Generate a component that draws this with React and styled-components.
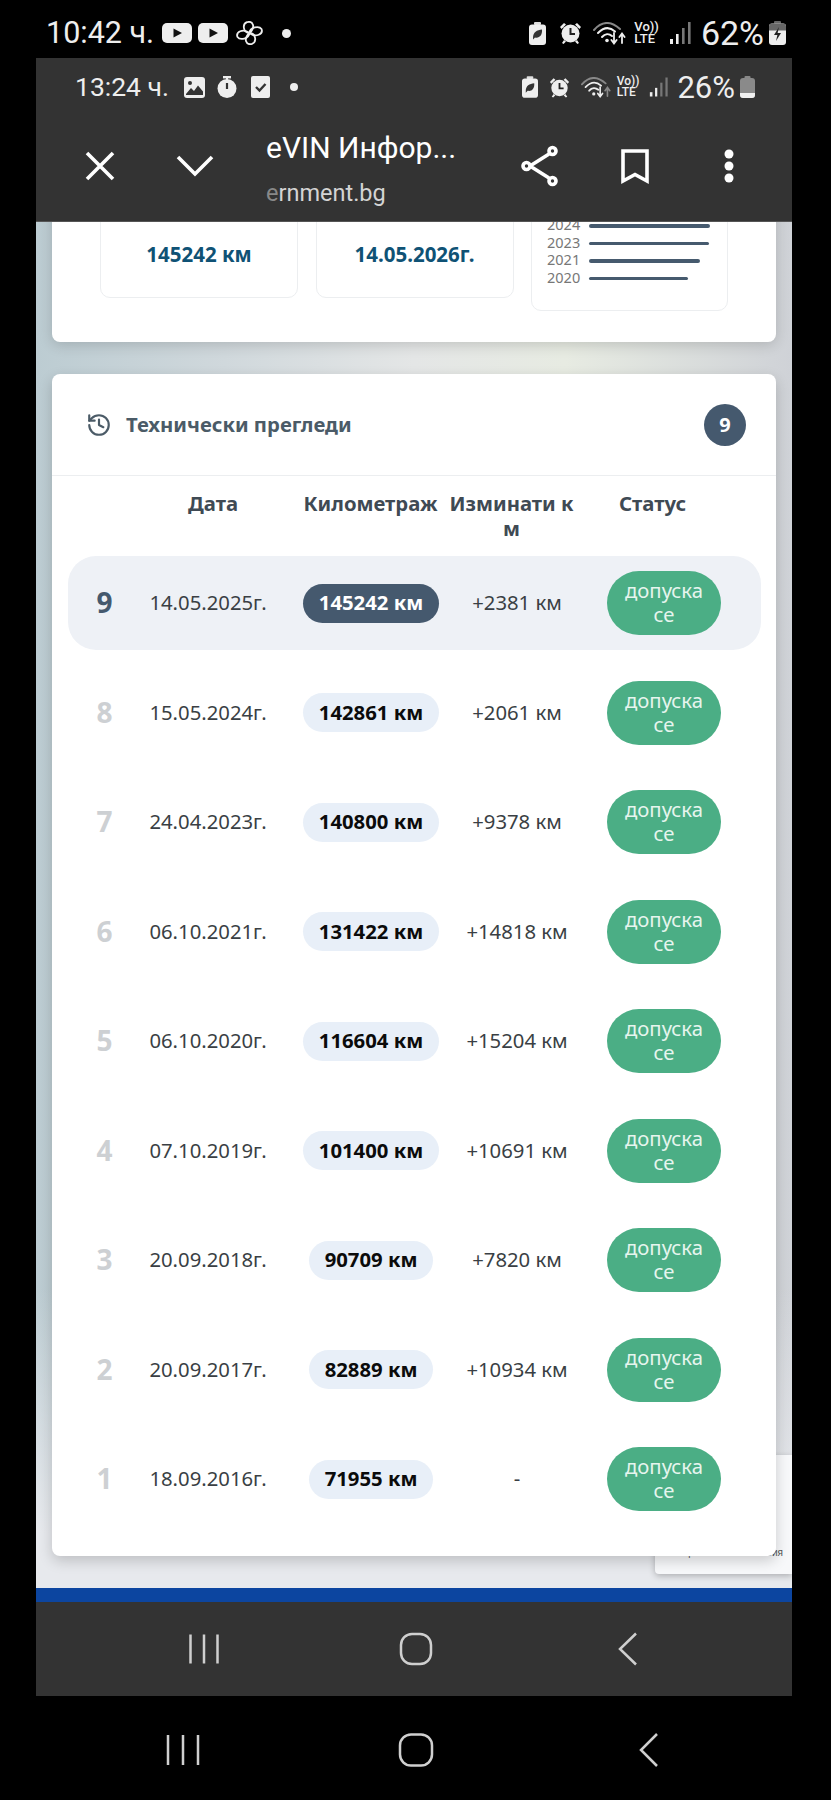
import React from 'react';
import styled, { createGlobalStyle } from 'styled-components';
import { History } from 'lucide-react';

const inspections = [
  { n: 9, date: '14.05.2025г.', km: '145242 км', diff: '+2381 км', active: true },
  { n: 8, date: '15.05.2024г.', km: '142861 км', diff: '+2061 км' },
  { n: 7, date: '24.04.2023г.', km: '140800 км', diff: '+9378 км' },
  { n: 6, date: '06.10.2021г.', km: '131422 км', diff: '+14818 км' },
  { n: 5, date: '06.10.2020г.', km: '116604 км', diff: '+15204 км' },
  { n: 4, date: '07.10.2019г.', km: '101400 км', diff: '+10691 км' },
  { n: 3, date: '20.09.2018г.', km: '90709 км', diff: '+7820 км' },
  { n: 2, date: '20.09.2017г.', km: '82889 км', diff: '+10934 км' },
  { n: 1, date: '18.09.2016г.', km: '71955 км', diff: '-' }
];

const chart = [
  { year: 2024, width: 121 },
  { year: 2023, width: 120 },
  { year: 2021, width: 111 },
  { year: 2020, width: 99 }
];

function YouTube({ ml }) {
  return (
    <Glyph $ml={ml} width="30" height="20" viewBox="0 0 30 20">
      <rect width="30" height="20" rx="5" fill="#eee" />
      <path d="M11.5 5.5 L20 10 L11.5 14.5 Z" fill="#111" />
    </Glyph>
  );
}

function Fan({ ml }) {
  return (
    <Glyph $ml={ml} width="27" height="24" viewBox="0 0 27 24" fill="none" stroke="#eee" strokeWidth="1.8">
      <path d="M13.5 12 C7 11.5 6 3 11 1.2 C17 -.5 20 6 13.5 12 Z" />
      <path d="M13.5 12 C14 6 23 4.5 25.5 8 C27.5 13 20 17 13.5 12 Z" />
      <path d="M13.5 12 C20 12.5 21 21 16 22.8 C10 24.5 7 18 13.5 12 Z" />
      <path d="M13.5 12 C13 18 4 19.5 1.5 16 C-.5 11 7 7 13.5 12 Z" />
    </Glyph>
  );
}

function Dot({ ml, size = 9 }) {
  return (
    <Glyph $ml={ml} width={size} height={size} viewBox="0 0 10 10">
      <circle cx="5" cy="5" r="5" fill="#eee" />
    </Glyph>
  );
}

function LeafBattery({ ml, w = 17, h = 23 }) {
  return (
    <Glyph $ml={ml} width={w} height={h} viewBox="0 0 17 23">
      <rect x="5" width="7" height="3" rx="1" fill="#ddd" />
      <rect y="2.5" width="17" height="20.5" rx="3" fill="#eee" />
      <path d="M4 16 C4 10 8 8 13 7.5 C13.5 13 10.5 16.5 6 15.5 L4 17.5 Z" fill="#333" />
    </Glyph>
  );
}

function Alarm({ ml, w = 23, h = 22 }) {
  return (
    <Glyph $ml={ml} width={w} height={h} viewBox="0 0 23 22">
      <path d="M1 5 L5 1 L7 2.6 L2.6 7 Z M22 5 L18 1 L16 2.6 L20.4 7 Z M5 18 L3 21 L4.6 22 L7 19.5 Z M18 18 L20 21 L18.4 22 L16 19.5 Z" fill="#eee" />
      <circle cx="11.5" cy="11.5" r="9" fill="#eee" />
      <path d="M11.5 6 V12 H16" fill="none" stroke="#222" strokeWidth="2" />
    </Glyph>
  );
}

function Wifi({ ml, w = 34, h = 23, upColor = '#eee' }) {
  return (
    <Glyph $ml={ml} width={w} height={h} viewBox="0 0 34 23" fill="none" strokeLinecap="round">
      <path d="M1 8 C9 -1 18 -1 27 7" stroke="#888" strokeWidth="2" />
      <path d="M5 11 C11 5 17 5 22 9.5" stroke="#eee" strokeWidth="2" />
      <path d="M9 15 C12 11.5 16 11.5 19 14" stroke="#eee" strokeWidth="2" />
      <circle cx="14" cy="18.5" r="1.8" fill="#eee" />
      <path d="M21 11 V21 M18.4 18 L21 21.5 L23.6 18" stroke="#eee" strokeWidth="1.8" />
      <path d="M29 21 V12 M26.4 15 L29 11.5 L31.6 15" stroke={upColor} strokeWidth="1.8" />
    </Glyph>
  );
}

function Signal({ ml, w = 22, h = 22 }) {
  return (
    <Glyph $ml={ml} width={w} height={h} viewBox="0 0 22 22">
      <rect x="1" y="17" width="3" height="5" fill="#eee" />
      <rect x="7" y="12" width="2.6" height="10" fill="#eee" />
      <rect x="13" y="6" width="2.6" height="16" fill="#777" />
      <rect x="19" y="0" width="2.6" height="22" fill="#777" />
    </Glyph>
  );
}

function VoLte({ ml, big }) {
  return (
    <Volte $ml={ml} $big={big}>
      <span>Vo))</span>
      <span>LTE</span>
    </Volte>
  );
}

function ChargingBattery({ ml }) {
  return (
    <Glyph $ml={ml} width="17" height="24" viewBox="0 0 17 24">
      <rect x="5" width="7" height="3" rx="1" fill="#666" />
      <rect y="2.5" width="17" height="21.5" rx="3" fill="#eee" />
      <path d="M0 5.5 a3 3 0 0 1 3 -3 h11 a3 3 0 0 1 3 3 v4 h-17 Z" fill="#666" />
      <path d="M10 6 L5 14 H8.4 L7 20 L12 12 H8.6 Z" fill="#222" />
    </Glyph>
  );
}

function LowBattery({ ml }) {
  return (
    <Glyph $ml={ml} width="15" height="22" viewBox="0 0 15 22">
      <rect x="4.5" width="6" height="3" rx="1" fill="#888" />
      <rect y="2" width="15" height="20" rx="3" fill="#8a8a8a" />
      <path d="M0 17 h15 v2 a3 3 0 0 1 -3 3 h-9 a3 3 0 0 1 -3 -3 Z" fill="#f0f0f0" />
    </Glyph>
  );
}

function PictureIcon({ ml }) {
  return (
    <Glyph $ml={ml} width="21" height="21" viewBox="0 0 21 21">
      <rect width="21" height="21" rx="3" fill="#eee" />
      <circle cx="6" cy="6" r="2" fill="#333" />
      <path d="M2 17 L7 11 L10 14 L14 8.5 L19 14.5 V18 H2 Z" fill="#333" />
    </Glyph>
  );
}

function TimerIcon({ ml }) {
  return (
    <Glyph $ml={ml} width="20" height="22" viewBox="0 0 20 22">
      <rect x="6" width="8" height="2.4" fill="#eee" />
      <rect x="9" y="1" width="2" height="3" fill="#eee" />
      <circle cx="10" cy="12.5" r="9.5" fill="#eee" />
      <path d="M10 7 V13" stroke="#333" strokeWidth="2.2" />
    </Glyph>
  );
}

function CheckIcon({ ml }) {
  return (
    <Glyph $ml={ml} width="19" height="22" viewBox="0 0 19 22">
      <rect width="19" height="22" rx="2" fill="#eee" />
      <path d="M5 11 L8.5 14.5 L14.5 8" fill="none" stroke="#333" strokeWidth="2.4" />
    </Glyph>
  );
}

export default function App() {
  return (
    <>
      <GlobalStyle />
      <Phone>
        <OuterStatus>
          <Clock>10:42 ч.</Clock>
          <YouTube ml={8} />
          <YouTube ml={6} />
          <Fan ml={8} />
          <Dot ml={19} />
          <Spacer />
          <LeafBattery />
          <Alarm ml={13} />
          <Wifi ml={11} />
          <VoLte ml={7} big />
          <Signal ml={10} />
          <Percent $ml={10}>62%</Percent>
          <ChargingBattery ml={5} />
        </OuterStatus>

        <Frame>
          <InnerStatus>
            <SmallClock>13:24 ч.</SmallClock>
            <PictureIcon ml={15} />
            <TimerIcon ml={12} />
            <CheckIcon ml={14} />
            <Dot ml={20} size={8} />
            <Spacer />
            <LeafBattery w={16} h={22} />
            <Alarm ml={11} w={21} h={21} />
            <Wifi ml={11} w={31} h={21} upColor="#888" />
            <VoLte ml={5} />
            <Signal ml={10} w={19} h={20} />
            <SmallPercent $ml={9}>26%</SmallPercent>
            <LowBattery ml={5} />
          </InnerStatus>

          <Toolbar>
            <ToolIcon viewBox="0 0 40 40">
              <path d="M7 7 L33 33 M33 7 L7 33" />
            </ToolIcon>
            <ToolIcon viewBox="0 0 40 40">
              <path d="M3 11 L20 28 L37 11" />
            </ToolIcon>
            <TitleBlock>
              <PageTitle>eVIN Инфор...</PageTitle>
              <PageUrl>
                <FadedLetter>e</FadedLetter>rnment.bg
              </PageUrl>
            </TitleBlock>
            <ShareIcon viewBox="0 0 40 44">
              <path d="M10 22 L29 10 M10 22 L29 34" />
              <circle cx="6.5" cy="22" r="3.5" />
              <circle cx="32.5" cy="7" r="3.5" />
              <circle cx="32.5" cy="37" r="3.5" />
            </ShareIcon>
            <ToolIcon viewBox="0 0 40 40">
              <path d="M8 5 H32 V35 L20 28.5 L8 35 Z" />
            </ToolIcon>
            <DotsIcon viewBox="0 0 40 40">
              <circle cx="20" cy="8" r="4.5" />
              <circle cx="20" cy="20" r="4.5" />
              <circle cx="20" cy="32" r="4.5" />
            </DotsIcon>
          </Toolbar>

          <Page>
            <CaptchaBadge>
              <CaptchaLinks>Поверителност - Условия</CaptchaLinks>
            </CaptchaBadge>

            <SummaryCard>
              <StatBox>
                <StatValue>145242 км</StatValue>
              </StatBox>
              <StatBox>
                <StatValue>14.05.2026г.</StatValue>
              </StatBox>
              <ChartBox>
                {chart.map(row => (
                  <ChartRow key={row.year}>
                    <ChartYear>{row.year}</ChartYear>
                    <ChartBar style={{ width: row.width }} />
                  </ChartRow>
                ))}
              </ChartBox>
            </SummaryCard>

            <TableCard>
              <CardHead>
                <History size={26} color="#4b5b67" strokeWidth={2} />
                <CardTitle>Технически прегледи</CardTitle>
                <CountBadge>9</CountBadge>
              </CardHead>

              <HeadRow>
                <span />
                <HeadCell>Дата</HeadCell>
                <HeadCell>Километраж</HeadCell>
                <HeadCell>
                  Изминати к<br />м
                </HeadCell>
                <HeadCell>Статус</HeadCell>
              </HeadRow>

              <Rows>
                {inspections.map(row => (
                  <Row key={row.n} $active={row.active}>
                    <Rank $active={row.active}>{row.n}</Rank>
                    <TextCell>{row.date}</TextCell>
                    <Cell>
                      <KmPill $active={row.active}>{row.km}</KmPill>
                    </Cell>
                    <TextCell>{row.diff}</TextCell>
                    <Cell>
                      <StatusPill>допуска се</StatusPill>
                    </Cell>
                  </Row>
                ))}
              </Rows>
            </TableCard>
          </Page>

          <BlueStrip />

          <InnerNav>
            <NavIcon viewBox="0 0 40 40">
              <path d="M6.5 5.5 V34.5 M20 5.5 V34.5 M33.5 5.5 V34.5" />
            </NavIcon>
            <NavIcon viewBox="0 0 40 40">
              <rect x="5" y="5" width="30" height="30" rx="11" />
            </NavIcon>
            <NavIcon viewBox="0 0 40 40">
              <path d="M28 4.5 L12 20 L28 35.5" />
            </NavIcon>
          </InnerNav>
        </Frame>

        <OuterNav>
          <NavIcon viewBox="0 0 40 40">
            <path d="M5 5 V35 M20 5 V35 M35 5 V35" />
          </NavIcon>
          <NavIcon viewBox="0 0 40 40">
            <rect x="4" y="4.5" width="32" height="31" rx="11" />
          </NavIcon>
          <NavIcon viewBox="0 0 40 40">
            <path d="M28 4 L12 20 L28 36" />
          </NavIcon>
        </OuterNav>
      </Phone>
    </>
  );
}

const GlobalStyle = createGlobalStyle`
  html, body {
    margin: 0;
    background: #000;
  }

  * {
    box-sizing: border-box;
  }
`;

const Phone = styled.div`
  width: 831px;
  height: 1800px;
  overflow: hidden;
  background: #000;
  font-family: 'Noto Sans', sans-serif;
`;

const Glyph = styled.svg`
  display: block;
  flex: none;
  margin-left: ${p => p.$ml || 0}px;
`;

const Spacer = styled.div`
  flex: 1;
`;

const OuterStatus = styled.div`
  height: 58px;
  padding: 8px 45px 0 46px;
  display: flex;
  align-items: center;
`;

const Clock = styled.span`
  font: 400 30.5px/1 Roboto, sans-serif;
  color: #eee;
  white-space: nowrap;
`;

const Percent = styled(Clock)`
  font-size: 34px;
  margin-left: ${p => p.$ml || 0}px;
`;

const SmallClock = styled.span`
  font: 400 26.5px/1 Roboto, sans-serif;
  color: #eee;
  white-space: nowrap;
`;

const SmallPercent = styled(SmallClock)`
  font-size: 31px;
  margin-left: ${p => p.$ml || 0}px;
`;

const Volte = styled.div`
  display: flex;
  flex-direction: column;
  flex: none;
  margin-left: ${p => p.$ml || 0}px;
  font: 500 ${p => (p.$big ? 13 : 12)}px/${p => (p.$big ? 12 : 11)}px Roboto, sans-serif;
  color: #eee;
`;

const Frame = styled.div`
  width: 756px;
  margin-left: 36px;
`;

const InnerStatus = styled.div`
  height: 58px;
  padding: 0 37px 0 39px;
  display: flex;
  align-items: center;
  background: #333;
`;

const Toolbar = styled.div`
  height: 106px;
  padding: 0 43px 6px 44px;
  display: flex;
  align-items: center;
  gap: 54.5px;
  background: #333;
  border-bottom: 1px solid #555;
`;

const ToolIcon = styled.svg`
  width: 40px;
  height: 40px;
  flex: none;
  fill: none;
  stroke: #fff;
  stroke-width: 3.6;
`;

const ShareIcon = styled(ToolIcon)`
  margin-left: auto;
  height: 44px;
`;

const DotsIcon = styled(ToolIcon)`
  fill: #fff;
  stroke: none;
`;

const TitleBlock = styled.div`
  width: 200px;
  margin: 6px -54.5px 0 -3px;
  flex: none;
`;

const PageTitle = styled.div`
  font: 400 30px/36px Roboto, sans-serif;
  color: #fff;
  white-space: nowrap;
`;

const PageUrl = styled.div`
  margin-top: 12px;
  font: 400 23.5px/30px Roboto, sans-serif;
  color: #d4d4d4;
  white-space: nowrap;
`;

const FadedLetter = styled.span`
  color: #888;
`;

const Page = styled.div`
  position: relative;
  height: 1366px;
  padding: 0 16px;
  display: flex;
  flex-direction: column;
  gap: 32px;
  overflow: hidden;
  background:
    linear-gradient(180deg, rgba(231, 233, 237, 0) 0, rgba(231, 233, 237, 0) 78%, #e7e9ed 96%),
    linear-gradient(90deg, #bcccd2 0, #d0d8dc 25%, #e4e6e6 50%, #e7ebe2 70%, #cfd2d7 100%);
`;

const CaptchaBadge = styled.div`
  position: absolute;
  left: 619px;
  right: 0;
  bottom: 14px;
  height: 119px;
  padding: 0 9px 15px 0;
  display: flex;
  justify-content: flex-end;
  align-items: flex-end;
  background: #f7f8fa;
  border-radius: 4px 0 0 4px;
  box-shadow: 0 2px 6px rgba(0, 0, 0, 0.25);
`;

const CaptchaLinks = styled.span`
  font: 400 10px/12px 'Liberation Sans', sans-serif;
  color: #555;
  white-space: nowrap;
`;

const SummaryCard = styled.section`
  position: relative;
  z-index: 1;
  margin-top: -80px;
  padding: 20px 47.5px 31px 48px;
  display: flex;
  align-items: flex-start;
  gap: 17.5px;
  flex: none;
  background: #fff;
  border-radius: 8px;
  box-shadow: 0 3px 14px rgba(0, 0, 0, 0.16);
`;

const StatBox = styled.div`
  width: 198px;
  height: 136px;
  padding-bottom: 31px;
  display: flex;
  align-items: flex-end;
  justify-content: center;
  border: 1px solid #eceef0;
  border-radius: 10px;
`;

const StatValue = styled.div`
  font: 700 20.5px/24px 'Noto Sans', sans-serif;
  color: #0f5275;
`;

const ChartBox = styled.div`
  width: 197px;
  height: 149px;
  padding: 54px 0 0 15px;
  border: 1px solid #eceef0;
  border-radius: 10px;
`;

const ChartRow = styled.div`
  height: 17.5px;
  display: flex;
  align-items: center;
  gap: 8px;
`;

const ChartYear = styled.span`
  width: 34px;
  padding-bottom: 2px;
  font: 400 14.5px/17px 'Noto Sans', sans-serif;
  color: #777;
`;

const ChartBar = styled.div`
  height: 3.5px;
  background: #465a6e;
  border-radius: 2px;
`;

const TableCard = styled.section`
  position: relative;
  z-index: 1;
  flex: none;
  background: #fff;
  border-radius: 8px;
  box-shadow: 0 5px 14px rgba(0, 0, 0, 0.18);
  padding-bottom: 30px;
`;

const CardHead = styled.header`
  height: 102px;
  padding: 0 30px 0 34px;
  display: flex;
  align-items: center;
  border-bottom: 1px solid #eceef0;
`;

const CardTitle = styled.h2`
  margin: 0 auto 2px 14px;
  font: 700 20.3px/24px 'Noto Sans', sans-serif;
  color: #4b5b67;
`;

const CountBadge = styled.div`
  width: 42px;
  height: 42px;
  display: flex;
  align-items: center;
  justify-content: center;
  border-radius: 50%;
  background: #45596e;
  color: #fff;
  font: 700 20px/1 'Noto Sans', sans-serif;
`;

const HeadRow = styled.div`
  height: 80px;
  margin: 0 15px 0 16px;
  padding-top: 15px;
  display: grid;
  grid-template-columns: 73px 144px 171px 111px 171px;
  align-items: start;
`;

const HeadCell = styled.div`
  display: flex;
  justify-content: center;
  white-space: nowrap;
  text-align: center;
  font: 700 20.3px/25px 'Noto Sans', sans-serif;
  color: #3f4a54;
`;

const Rows = styled.div`
  margin: 0 15px 0 16px;
  display: flex;
  flex-direction: column;
  gap: 15.5px;
`;

const Row = styled.div`
  height: 94px;
  display: grid;
  grid-template-columns: 73px 134px 192px 100px 194px;
  align-items: center;
  border-radius: 28px;
  background: ${p => (p.$active ? '#eef1f6' : 'transparent')};
`;

const Rank = styled.div`
  padding-bottom: 2px;
  text-align: center;
  font: 700 28px/1 'Noto Sans', sans-serif;
  color: ${p => (p.$active ? '#45596e' : '#cdd0d3')};
`;

const Cell = styled.div`
  display: flex;
  justify-content: center;
  white-space: nowrap;
  font: 400 20.3px/24px 'Noto Sans', sans-serif;
  color: #3a3f44;
`;

const TextCell = styled(Cell)`
  padding-bottom: 2px;
`;

const KmPill = styled.span`
  height: 39px;
  padding: 0 16px 2px;
  display: flex;
  align-items: center;
  border-radius: 20px;
  font-weight: 700;
  background: ${p => (p.$active ? '#45596e' : '#e8eff8')};
  color: ${p => (p.$active ? '#fff' : '#0b0b0b')};
`;

const StatusPill = styled.span`
  width: 114px;
  height: 64px;
  padding: 7px 16px;
  border-radius: 32px;
  white-space: normal;
  text-align: center;
  background: #4bae85;
  color: #e6f5ee;
`;

const BlueStrip = styled.div`
  height: 14px;
  background: #0c45a0;
`;

const InnerNav = styled.nav`
  height: 94px;
  padding-left: 3px;
  display: flex;
  align-items: center;
  justify-content: center;
  gap: 172px;
  background: #333;
`;

const OuterNav = styled.nav`
  height: 104px;
  padding-top: 4px;
  display: flex;
  align-items: center;
  justify-content: center;
  gap: 193px;
`;

const NavIcon = styled.svg`
  width: 40px;
  height: 40px;
  flex: none;
  fill: none;
  stroke: #cfcfcf;
  stroke-width: 2.5;
`;
